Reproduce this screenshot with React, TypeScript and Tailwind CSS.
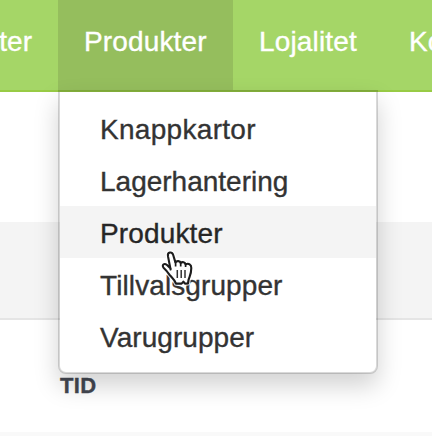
import clsx from 'clsx';

const menuItems = [
  { label: 'Knappkartor', tracking: 'tracking-[0.3px]' },
  { label: 'Lagerhantering', tracking: 'tracking-[0px]' },
  { label: 'Produkter', tracking: 'tracking-[0.15px]', active: true },
  { label: 'Tillvalsgrupper', tracking: 'tracking-[0.1px]' },
  { label: 'Varugrupper', tracking: 'tracking-[0.05px]' },
];

const handPath =
  'M10.6 19.5 L8 6.4 C7.2 1.8 12 1.3 13.2 5 L15.4 12.4 C16.8 10.4 20 10.8 20.6 13 C22.4 11.4 25 12.2 25.6 14.4 C28.6 12.8 31.4 14.6 31.3 18 C31.3 23.2 30.3 25 29 28.5 C28.3 30 28.3 31.5 28 33.4 L25 33.6 L23.4 31.6 L21.6 33.6 L16 33.6 C14.6 29.4 12.2 28 9.4 24.6 C7.4 21.8 5.8 19.9 3.8 18 C1.2 15 4.2 12.8 7 15 L10.6 18.5 Z';

interface NavItemProps {
  label: string;
  className?: string;
}

function NavItem({ label, className }: NavItemProps) {
  return (
    <a className={clsx('flex h-full shrink-0 items-center pb-[7px] whitespace-nowrap text-white', className)}>
      {label}
    </a>
  );
}

function HandCursor() {
  return (
    <svg className="absolute top-[250px] left-[160px] h-[38px] w-[36px]" viewBox="0 0 36 38" fill="none">
      <path d={handPath} fill="white" stroke="white" strokeOpacity="0.8" strokeWidth="4.4" strokeLinejoin="round" />
      <path d={handPath} fill="white" stroke="#1c1c1c" strokeWidth="2.1" strokeLinejoin="round" />
      <path d="M15.6 11.5V16.5M20.7 12.5V16.5M25.6 14V17" stroke="#1c1c1c" strokeWidth="1.7" />
      <path d="M17.3 20V28M21.2 20V28M25 20V28" stroke="#333" strokeWidth="1.5" />
    </svg>
  );
}

export default function App() {
  return (
    <div className="relative h-[436px] w-[432px] overflow-hidden bg-white font-['Liberation_Sans',Arial,sans-serif] text-[28px] leading-[40px] [-webkit-text-stroke:0.35px_currentColor]">
      <nav className="flex h-[92px] border-b-2 border-[#98cb45] bg-[#a5d667]">
        <div className="flex w-[58px] shrink-0 justify-end pr-[26px]">
          <NavItem label="ter" />
        </div>
        <NavItem label="Produkter" className="w-[175px] bg-[#95be5d] pl-[26px] tracking-[0.15px]" />
        <NavItem label="Lojalitet" className="w-[151px] pl-[26px] tracking-[0.15px]" />
        <NavItem label="Ko" className="pl-[25px]" />
      </nav>

      <div className="mt-[130px] h-[98px] border-b-2 border-[#e5e5e5] bg-[#f4f4f4]" />
      <div className="h-[112px] pt-[46px] pl-[60px] text-[22px] leading-[40px] font-bold tracking-[0.3px] text-[#434751]">
        TID
      </div>
      <div className="h-[4px] bg-[#f9f9f9]" />

      <ul className="absolute top-[90px] left-[58px] w-[320px] rounded-b-[8px] border-2 border-black/15 bg-white bg-clip-padding py-[10px] shadow-[0_12px_24px_rgba(0,0,0,0.175)]">
        {menuItems.map(({ label, tracking, active }) => (
          <li
            key={label}
            className={clsx('h-[52px] pt-[8px] pl-[40px]', tracking, active ? 'bg-[#f4f4f4] text-[#262626]' : 'text-[#333333]')}
          >
            {label}
          </li>
        ))}
      </ul>

      <HandCursor />
    </div>
  );
}
